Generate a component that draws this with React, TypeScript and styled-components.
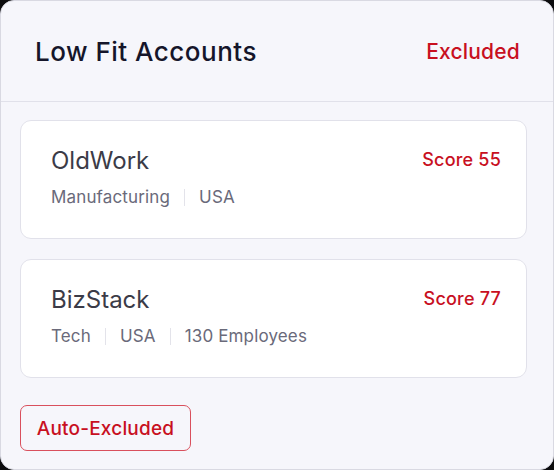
import styled, { createGlobalStyle } from "styled-components";

const GlobalStyle = createGlobalStyle`
  html, body {
    margin: 0;
    padding: 0;
    background: #0c0c0e;
  }
  * { box-sizing: border-box; }
`;

const Panel = styled.div`
  width: 554px;
  height: 470px;
  background: #f6f6fb;
  border: 1px solid #d9d9e2;
  border-radius: 14px;
  font-family: Inter, "Noto Sans", sans-serif;
  display: flex;
  flex-direction: column;
  overflow: hidden;
`;

const Header = styled.div`
  height: 101px;
  flex-shrink: 0;
  display: flex;
  align-items: center;
  justify-content: space-between;
  padding: 0 33px 0 34px;
  border-bottom: 1px solid #e1e1ea;
`;

const Title = styled.h2`
  margin: 0;
  font-size: 26px;
  font-weight: 500;
  color: #15152a;
  letter-spacing: 0.5px;
`;

const Status = styled.span`
  font-size: 21px;
  font-weight: 500;
  color: #c8101f;
  letter-spacing: 0.2px;
`;

const Body = styled.div`
  display: flex;
  flex-direction: column;
  align-items: flex-start;
  padding: 18px 26px 0 19px;
`;

const Cards = styled.div`
  display: flex;
  flex-direction: column;
  gap: 20px;
  width: 100%;
`;

const Card = styled.div`
  height: 119px;
  background: #ffffff;
  border: 1px solid #e1e1ea;
  border-radius: 11px;
  display: flex;
  justify-content: space-between;
  align-items: flex-start;
  padding: 25px 25px 0 30px;
`;

const Info = styled.div`
  display: flex;
  flex-direction: column;
  gap: 10px;
`;

const Name = styled.div`
  font-size: 24px;
  line-height: 30px;
  color: #3b3b47;
`;

const Meta = styled.div`
  display: flex;
  align-items: center;
  font-size: 17px;
  line-height: 22px;
  color: #6a6a7a;
  letter-spacing: 0.15px;
`;

const MetaItem = styled.span`
  & + &::before {
    content: "";
    display: inline-block;
    width: 1px;
    height: 17px;
    background: #e3e3ea;
    margin: 0 14px;
    vertical-align: -3px;
  }
`;

const Score = styled.span`
  font-size: 18px;
  font-weight: 500;
  line-height: 28px;
  color: #c8101f;
  letter-spacing: 0.2px;
`;

const Tag = styled.button`
  margin-top: 27px;
  width: 171px;
  height: 46px;
  background: transparent;
  border: 1px solid #d9505d;
  border-radius: 7px;
  font-family: inherit;
  font-size: 19px;
  font-weight: 500;
  color: #c8101f;
  padding: 0;
  letter-spacing: 0.2px;
`;

const accounts = [
  { name: "OldWork", meta: ["Manufacturing", "USA"], score: 55 },
  { name: "BizStack", meta: ["Tech", "USA", "130 Employees"], score: 77 },
];

export default function App() {
  return (
    <>
      <GlobalStyle />
      <Panel>
        <Header>
          <Title>Low Fit Accounts</Title>
          <Status>Excluded</Status>
        </Header>
        <Body>
          <Cards>
            {accounts.map((a) => (
              <Card key={a.name}>
                <Info>
                  <Name>{a.name}</Name>
                  <Meta>
                    {a.meta.map((m) => (
                      <MetaItem key={m}>{m}</MetaItem>
                    ))}
                  </Meta>
                </Info>
                <Score>Score {a.score}</Score>
              </Card>
            ))}
          </Cards>
          <Tag>Auto-Excluded</Tag>
        </Body>
      </Panel>
    </>
  );
}
